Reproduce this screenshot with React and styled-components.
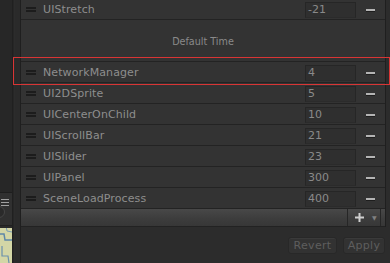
import React from "react";
import styled, { createGlobalStyle } from "styled-components";

const Global = createGlobalStyle`
  html, body { margin: 0; padding: 0; background: #2a2a2a; }
  body { font-family: "DejaVu Sans", Verdana, sans-serif; }
  * { box-sizing: border-box; }
`;

const Root = styled.div`
  position: relative;
  display: flex;
  width: 390px;
  height: 263px;
  overflow: hidden;
  background: #2a2a2a;
`;

const SideDock = styled.div`
  width: 12px;
  display: flex;
  flex-direction: column;
  background: #262626;
`;

const DockTop = styled.div`
  height: 193px;
  background: #272727;
  border-bottom: 1px solid #1e1e1e;
`;

const DockBar = styled.div`
  height: 33px;
  background: #303030;
  border-bottom: 1px solid #202020;
  position: relative;
  padding-top: 6px;
  padding-left: 1px;
`;

const Burger = styled.div`
  width: 8px;
  display: flex;
  flex-direction: column;
  gap: 1px;
  span { height: 1px; background: #a0a0a0; display: block; margin-bottom: 1px; }
`;

const Knob = styled.div`
  position: absolute;
  left: -7px;
  top: 13px;
  width: 12px;
  height: 12px;
  border-radius: 50%;
  background: #2a2a2a;
  border: 1px solid #454545;
`;

const MapThumb = styled.svg`
  display: block;
  flex: 1;
  width: 12px;
`;

const DockEdge = styled.div`
  width: 3px;
  background: linear-gradient(90deg, #1d1d1d, #2f2f2f);
`;

const Gutter = styled.div`
  width: 5px;
  background: #2a2a2a;
`;

const Panel = styled.div`
  flex: 1;
  display: flex;
  flex-direction: column;
  border-left: 1px solid #1f1f1f;
  background: #2c2c2c;
`;

const List = styled.div`
  margin-top: -1px;
  margin-right: 4px;
  border-right: 1px solid #1f1f1f;
  background: #333333;
  display: flex;
  flex-direction: column;
`;

const Row = styled.div`
  height: 21px;
  border-bottom: 1px solid #232323;
  display: flex;
  align-items: center;
  padding-left: 5px;
  background: #333333;
`;

const Handle = styled.div`
  width: 10px;
  display: flex;
  flex-direction: column;
  gap: 1px;
  margin-top: 1px;
  span { display: block; height: 2px; background: #1c1c1c; }
`;

const Label = styled.div`
  flex: 1;
  margin-left: 7px;
  font-size: 11px;
  color: #8e8e8e;
  white-space: nowrap;
  letter-spacing: 0.1px;
`;

const NumField = styled.div`
  width: 51px;
  height: 16px;
  margin-top: 1px;
  background: #2f2f2f;
  border: 1px solid #262626;
  border-bottom-color: #2b2b2b;
  font-size: 11px;
  line-height: 14px;
  color: #8a8a8a;
  padding-left: 2px;
`;

const MinusCell = styled.div`
  width: 29px;
  display: flex;
  justify-content: center;
  align-items: center;
  span {
    display: block;
    width: 9px;
    height: 2px;
    margin-top: 2px;
    background: #b4b4b4;
    box-shadow: 0 1px 0 #1e1e1e;
  }
`;

const SectionHeader = styled.div`
  height: 42px;
  border-bottom: 1px solid #232323;
  display: flex;
  align-items: center;
  justify-content: center;
  font-size: 9.6px;
  color: #8a8a8a;
  padding-top: 1px;
`;

const Footer = styled.div`
  height: 18px;
  border-bottom: 1px solid #222;
  background: linear-gradient(180deg, #484848 0%, #3c3c3c 60%, #373737 100%);
  display: flex;
  justify-content: flex-end;
  padding-right: 4px;
`;

const AddBtn = styled.div`
  width: 34px;
  border-left: 1px solid #262626;
  border-right: 1px solid #262626;
  display: flex;
  align-items: center;
  padding-left: 7px;
  gap: 8px;
`;

const Caret = styled.span`
  font-size: 6px;
  color: #808080;
  line-height: 1;
`;

const Actions = styled.div`
  display: flex;
  justify-content: flex-end;
  gap: 6px;
  padding-top: 10px;
  padding-right: 5px;
`;

const Btn = styled.div`
  width: ${(p) => p.$w}px;
  height: 17px;
  border-radius: 3px;
  background: #323232;
  border: 1px solid #282828;
  box-shadow: inset 0 1px 0 #3a3a3a;
  color: #5e5e5e;
  font-size: 11px;
  display: flex;
  align-items: center;
  justify-content: center;
  letter-spacing: 0.3px;
`;

const Highlight = styled.div`
  position: absolute;
  left: 13px;
  top: 57px;
  width: 377px;
  height: 28px;
  border: 1px solid #d93535;
  pointer-events: none;
`;

const items = [
  ["UI2DSprite", "5"],
  ["UICenterOnChild", "10"],
  ["UIScrollBar", "21"],
  ["UISlider", "23"],
  ["UIPanel", "300"],
  ["SceneLoadProcess", "400"],
];

function ListRow({ name, value }) {
  return (
    <Row>
      <Handle>
        <span />
        <span />
      </Handle>
      <Label>{name}</Label>
      <NumField>{value}</NumField>
      <MinusCell>
        <span />
      </MinusCell>
    </Row>
  );
}

export default function App() {
  return (
    <>
      <Global />
      <Root>
        <SideDock>
          <DockTop />
          <DockBar>
            <Burger>
              <span />
              <span />
              <span />
            </Burger>
            <Knob />
          </DockBar>
          <MapThumb viewBox="0 0 12 37" preserveAspectRatio="none">
            <rect x="0" y="0" width="12" height="37" fill="#d3d6a6" />
            <path d="M0 8 L4 8 L5 14 L12 14" stroke="#5d87a8" strokeWidth="1.5" fill="none" />
            <path d="M2 20 L2 30 L8 30 L9 37" stroke="#6a90ad" strokeWidth="1.2" fill="none" />
            <path d="M6 0 L7 5 L12 6" stroke="#7a9cb3" strokeWidth="1" fill="none" />
            <rect x="0" y="0" width="12" height="2" fill="#2a2a2a" />
          </MapThumb>
        </SideDock>
        <DockEdge />
        <Gutter />
        <Panel>
          <List>
            <Row>
              <Handle>
                <span />
                <span />
              </Handle>
              <Label>UIStretch</Label>
              <NumField>-21</NumField>
              <MinusCell>
                <span />
              </MinusCell>
            </Row>
            <SectionHeader>Default Time</SectionHeader>
            <ListRow name="NetworkManager" value="4" />
            {items.map(([n, v]) => (
              <ListRow key={n} name={n} value={v} />
            ))}
            <Footer>
              <AddBtn>
                <svg width="9" height="9" viewBox="0 0 9 9">
                  <rect x="0" y="3.5" width="9" height="2" fill="#cfcfcf" />
                  <rect x="3.5" y="0" width="2" height="9" fill="#cfcfcf" />
                </svg>
                <Caret>▼</Caret>
              </AddBtn>
            </Footer>
          </List>
          <Actions>
            <Btn $w={49}>Revert</Btn>
            <Btn $w={42}>Apply</Btn>
          </Actions>
        </Panel>
        <Highlight />
      </Root>
    </>
  );
}
